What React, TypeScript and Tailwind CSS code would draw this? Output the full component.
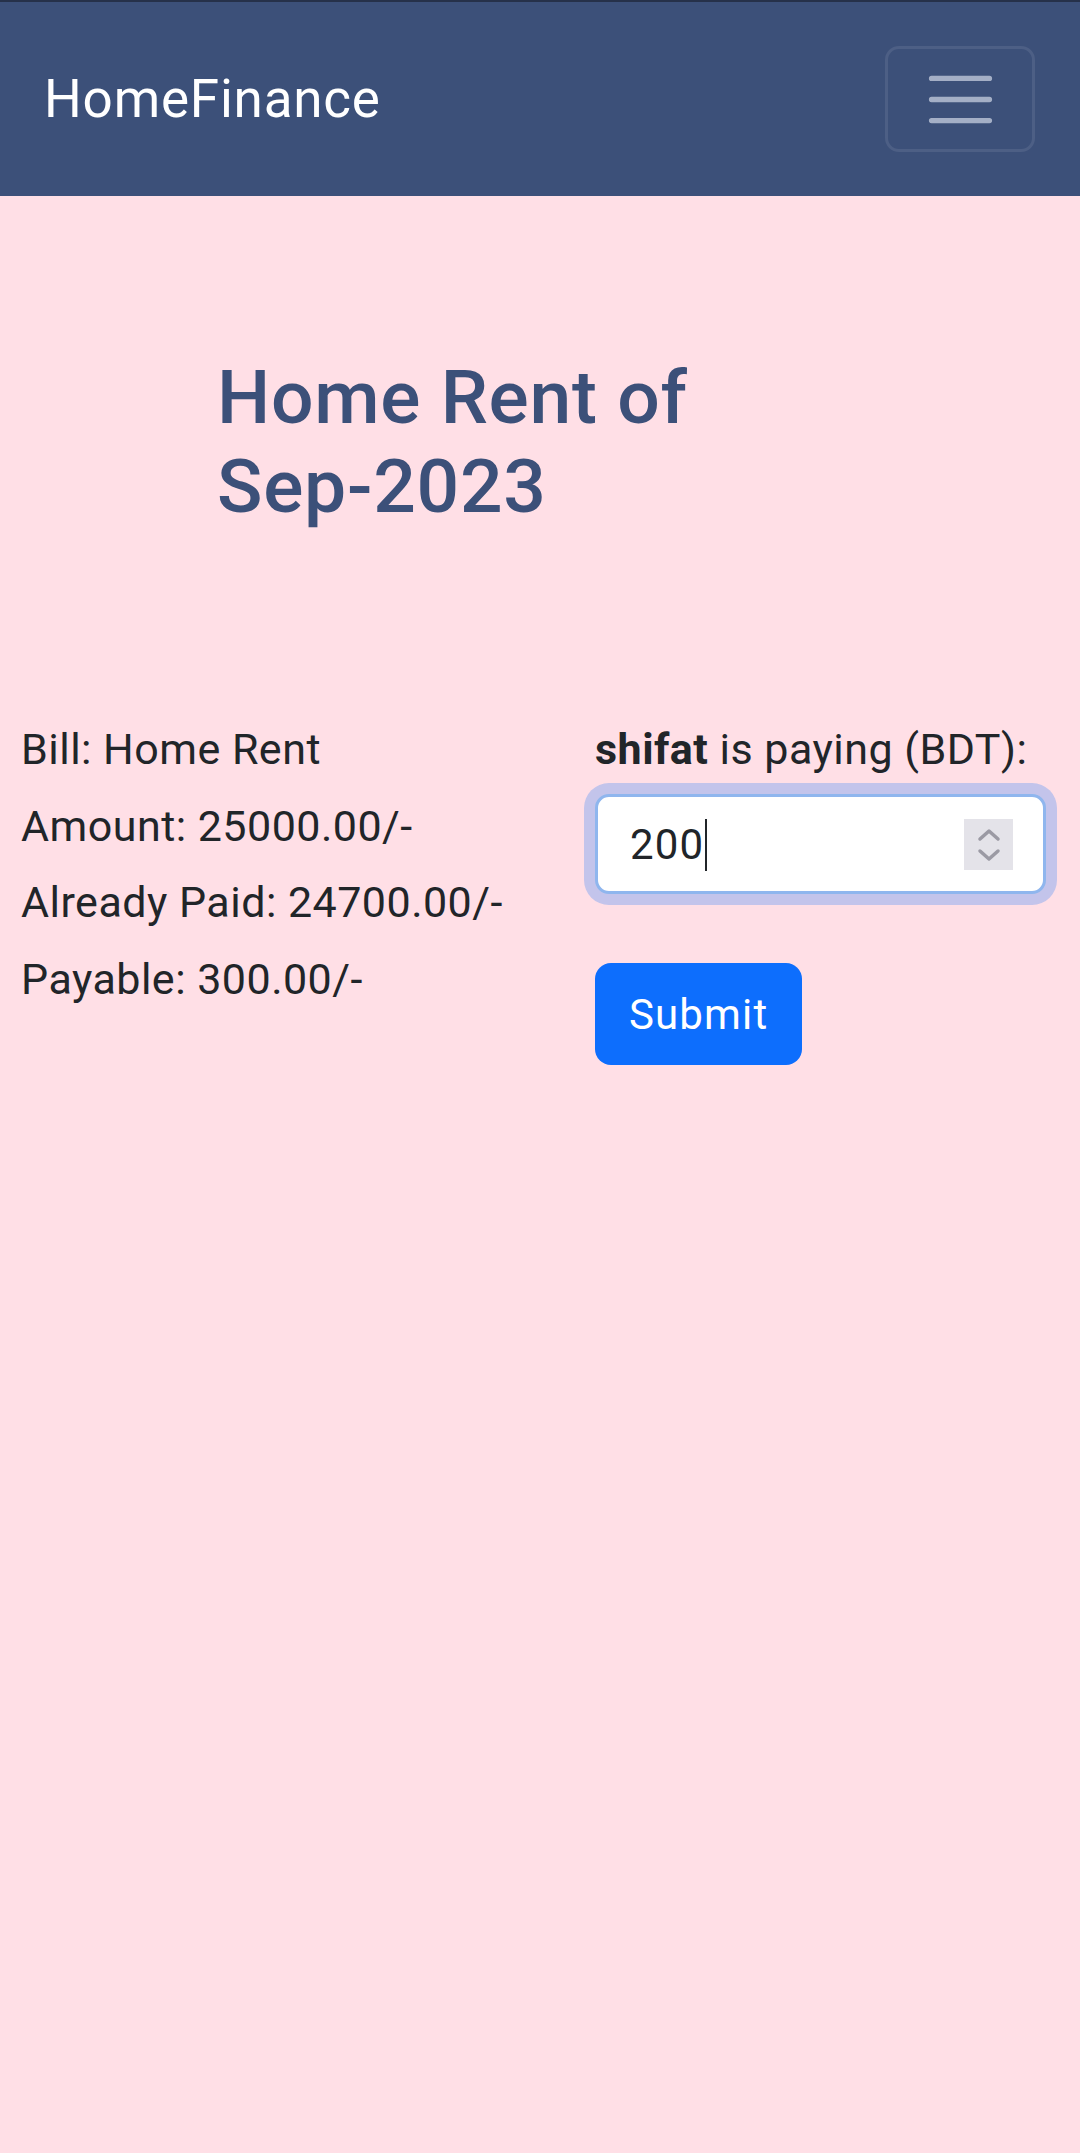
import { useState } from 'react';

function Navbar() {
  return (
    <nav className="flex h-[196px] items-center justify-between border-t-2 border-[#26314a] bg-[#3c5079] pl-[44px] pr-[45px]">
      <a className="text-[53px] leading-none tracking-[0.015em] text-white" href="#">
        HomeFinance
      </a>
      <button
        className="flex h-[106px] w-[150px] items-center justify-center rounded-[14px] border-[3px] border-[#4d5f85]"
        type="button"
        aria-label="Toggle navigation"
      >
        <svg width="79" height="79" viewBox="0 0 30 30">
          <path d="M4 7h22M4 15h22M4 23h22" stroke="#a4afc6" strokeWidth="2" strokeLinecap="round" />
        </svg>
      </button>
    </nav>
  );
}

export default function App() {
  const [amount, setAmount] = useState('200');

  return (
    <div className="min-h-screen bg-[#ffdfe6] font-['Roboto','Liberation_Sans',sans-serif] tracking-[0.03em] text-[#212529]">
      <Navbar />
      <main>
        <h1 className="mt-[157px] w-[760px] pl-[217px] text-[75px] font-medium leading-[89px] tracking-[0.01em] text-[#3c5079]">
          Home Rent of Sep-2023
        </h1>
        <div className="mt-[187px] grid grid-cols-[595px_1fr]">
          <div className="flex flex-col gap-[13.5px] pl-[21px] text-[43px] leading-[63px]">
            <div>Bill: Home Rent</div>
            <div>Amount: 25000.00/-</div>
            <div>Already Paid: 24700.00/-</div>
            <div>Payable: 300.00/-</div>
          </div>
          <form className="pr-[34px]" onSubmit={(event) => event.preventDefault()}>
            <label className="block text-[43px] leading-[63px]" htmlFor="amount">
              <span className="font-bold">shifat</span> is paying (BDT):
            </label>
            <div className="relative mt-[13px] h-[100px] rounded-[14px] border-[3px] border-[#8fb6ee] bg-white shadow-[0_0_0_11px_#c3c4eb]">
              <input
                id="amount"
                className="h-full w-full rounded-[14px] bg-transparent pl-[32px] text-[42px] tracking-[0.027em] outline-none"
                value={amount}
                onChange={(event) => setAmount(event.target.value)}
              />
              <span className="absolute left-[107px] top-[22px] h-[52px] w-[2px] bg-[#212529]" />
              <span className="absolute right-[30px] top-[22px] flex h-[51px] w-[49px] items-center justify-center bg-[#e4e3e9]">
                <svg width="26" height="38" viewBox="0 0 26 38" fill="none">
                  <path d="M4 13l9-8 9 8M4 25l9 8 9-8" stroke="#9b9aa4" strokeWidth="3.5" strokeLinecap="round" strokeLinejoin="round" />
                </svg>
              </span>
            </div>
            <button
              className="mt-[69px] h-[102px] rounded-[16px] bg-[#0d6efd] px-[34px] text-[42px] tracking-[0.027em] text-white"
              type="submit"
            >
              Submit
            </button>
          </form>
        </div>
      </main>
    </div>
  );
}
